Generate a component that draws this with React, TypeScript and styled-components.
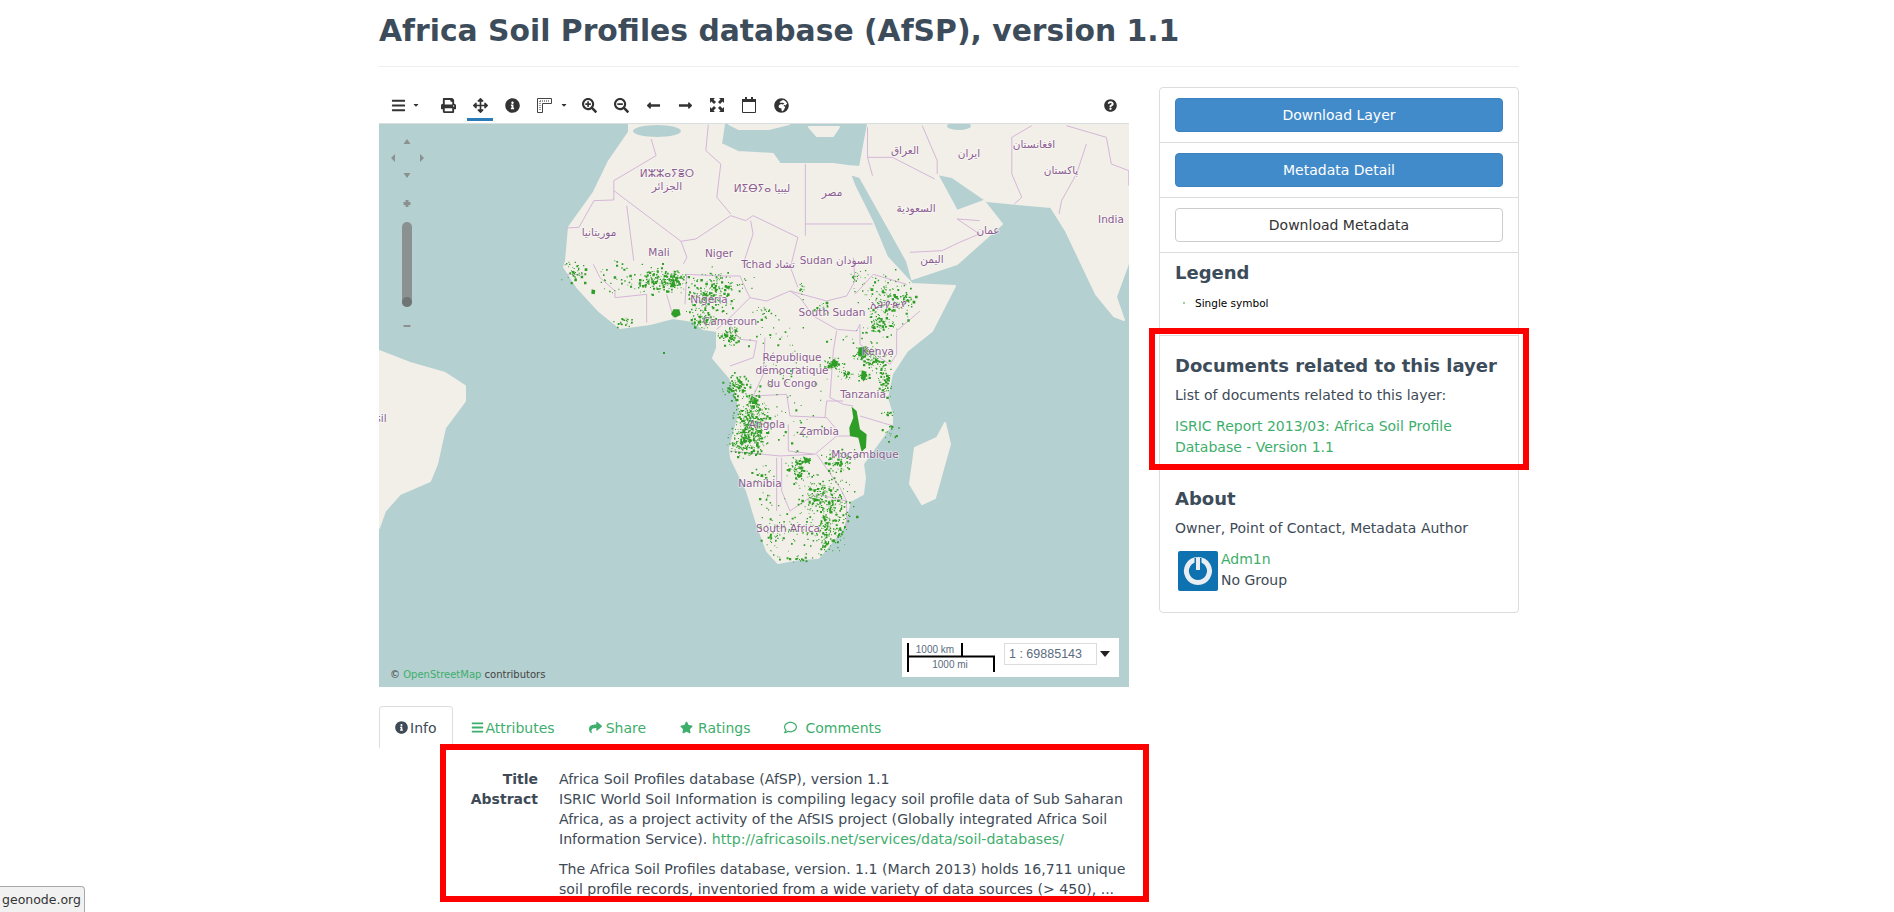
import styled, { createGlobalStyle } from 'styled-components';
import {
    FaBars, FaPrint, FaArrowsAlt, FaInfoCircle, FaSearchPlus, FaSearchMinus,
    FaLongArrowAltLeft, FaLongArrowAltRight, FaGlobeAfrica, FaQuestionCircle,
    FaCaretDown, FaShare, FaStar, FaRegComment,
} from 'react-icons/fa';

const GlobalStyle = createGlobalStyle`
    html, body{
        margin : 0;
        height : 912px;
        overflow : hidden;
        background : #fff;
    }
    body{
        font-family : "DejaVu Sans", sans-serif;
        font-size : 14px;
        line-height : 20px;
        color : #3e4a56;
    }
`;

const Page = styled.div`
    position : relative;
    height : 912px;
    overflow : hidden;
`;

const Container = styled.div`
    width : 1140px;
    margin-left : 379px;
`;

const PageHeader = styled.header`
    height : 66px;
    border-bottom : 1px solid #eee;
    box-sizing : content-box;

    h1{
        margin : 0;
        padding-top : 12px;
        font-size : 29.8px;
        line-height : 38px;
        font-weight : bold;
        color : #3d4c5a;
    }
`;

const Columns = styled.div`
    display : flex;
    gap : 30px;
    margin-top : 20px;
`;

const MainColumn = styled.main`
    width : 750px;
    flex : none;
`;

const Toolbar = styled.div`
    display : flex;
    align-items : center;
    height : 36px;
    padding : 0 12px;
    color : #333;
`;

const MenuButton = styled.div`
    display : flex;
    align-items : center;
    width : 41px;
    font-size : 15px;

    .caret{
        font-size : 8px;
        margin-left : 6px;
    }
`;

const ToolButton = styled.div<{ $active?: boolean; $wide?: boolean }>`
    position : relative;
    flex : none;
    display : flex;
    align-items : center;
    justify-content : center;
    width : ${p => (p.$wide ? '45px' : '32px')};
    height : 36px;
    font-size : 15px;
    padding-right : ${p => (p.$wide ? '13px' : '0')};
    box-sizing : border-box;

    .caret{
        position : absolute;
        right : 5px;
        font-size : 8px;
    }

    &::after{
        content : '';
        display : ${p => (p.$active ? 'block' : 'none')};
        position : absolute;
        left : 3px;
        right : 3px;
        bottom : 2px;
        height : 3px;
        background : #2b7bb9;
    }
`;

const HelpButton = styled.div`
    margin-left : auto;
    display : flex;
    font-size : 13px;
`;

const MapFrame = styled.div`
    position : relative;
    height : 564px;
    background : #b5d0d0;
    border-top : 1px solid #d8dedd;
    box-sizing : border-box;
    overflow : hidden;
`;

const MapCanvas = styled.svg`
    display : block;
`;

const Land = styled.path`
    fill : #f2efe9;
    stroke : #f2efe9;
    stroke-width : 2;
    stroke-linejoin : round;
`;

const Water = styled.ellipse`
    fill : #b5d0d0;
`;

const Border = styled.path`
    fill : none;
    stroke : #d5b6d8;
    stroke-width : 1;
    vector-effect : non-scaling-stroke;
`;

const Samples = styled.path`
    fill : #2f9e27;
`;

const MapLabel = styled.text`
    font-family : "DejaVu Sans", sans-serif;
    font-size : 10.5px;
    fill : #8c5c90;
    text-anchor : middle;
    stroke : rgba(255, 255, 255, 0.55);
    stroke-width : 1.5px;
    paint-order : stroke;
`;

const NavControl = styled.svg`
    position : absolute;
    left : 0;
    top : 0;
    fill : #8b9191;
`;

const Attribution = styled.div`
    position : absolute;
    left : 11px;
    bottom : 5px;
    font-size : 10px;
    line-height : 14px;
    color : #444;

    a{
        color : #3eae6c;
    }
`;

const ScaleBox = styled.div`
    position : absolute;
    right : 10px;
    bottom : 10px;
    width : 217px;
    height : 39px;
    background : #fff;
    display : flex;
    align-items : flex-start;
`;

const ScaleInput = styled.div`
    margin : 5px 0 0;
    width : 93px;
    height : 22px;
    box-sizing : border-box;
    border : 1px solid #dcdcdc;
    padding-left : 4px;
    font-family : "Liberation Sans", sans-serif;
    font-size : 12.5px;
    line-height : 20px;
    color : #5b6b80;
`;

const ScaleCaret = styled.div`
    margin : 13px 0 0 3px;
    width : 0;
    height : 0;
    border-left : 5px solid transparent;
    border-right : 5px solid transparent;
    border-top : 6px solid #222;
`;

const ScaleText = styled.text`
    font-family : "Liberation Sans", sans-serif;
    font-size : 10px;
    fill : #5b6b80;
    text-anchor : middle;
`;

const Tabs = styled.nav`
    display : flex;
    gap : 2px;
    height : 43px;
    margin-top : 19px;
    box-sizing : border-box;
`;

const Tab = styled.a<{ $active?: boolean; $gap?: number }>`
    display : flex;
    align-items : center;
    gap : ${p => p.$gap ?? 2}px;
    padding : 0 15px;
    height : 42px;
    box-sizing : border-box;
    border : 1px solid ${p => (p.$active ? '#ddd' : 'transparent')};
    border-bottom : none;
    border-radius : 4px 4px 0 0;
    color : ${p => (p.$active ? '#3e4a56' : '#3eae6c')};

    svg{
        font-size : 13px;
    }
`;

const InfoList = styled.dl`
    position : relative;
    display : grid;
    grid-template-columns : 159px 570px;
    column-gap : 21px;
    margin : 20px 0 0;

    dt{
        font-weight : bold;
        text-align : right;
    }
    dd{
        margin : 0;
        font-size : 14.12px;
    }
    p{
        margin : 0 0 10px;
    }
    a{
        color : #3eae6c;
    }
`;

const Highlight = styled.div<{ $box: string }>`
    position : absolute;
    inset : ${p => p.$box};
    border : 6px solid #ff0000;
    pointer-events : none;
`;

const SidePanel = styled.aside`
    width : 360px;
    height : 526px;
    box-sizing : border-box;
    border : 1px solid #ddd;
    border-radius : 4px;
`;

const ButtonRow = styled.div`
    padding : 10px 15px;
    border-bottom : 1px solid #ddd;
`;

const ActionButton = styled.button<{ $primary?: boolean }>`
    display : block;
    width : 100%;
    height : 34px;
    box-sizing : border-box;
    border : 1px solid ${p => (p.$primary ? '#3b82c0' : '#ccc')};
    border-radius : 4px;
    background : ${p => (p.$primary ? '#428bca' : '#fff')};
    color : ${p => (p.$primary ? '#fff' : '#333')};
    font-family : inherit;
    font-size : 14px;
`;

const PanelSection = styled.section<{ $height: number; $top: number; $ruled?: boolean }>`
    position : relative;
    height : ${p => p.$height}px;
    box-sizing : border-box;
    padding : ${p => p.$top}px 15px 0;
    border-top : ${p => (p.$ruled ? '1px solid #ddd' : 'none')};

    h4{
        margin : 0 0 9px;
        font-size : 18px;
        line-height : 20px;
        font-weight : bold;
        color : #3d4c5a;
    }
    p{
        margin : 0 0 10px;
        line-height : 21px;
    }
    a{
        color : #3eae6c;
        line-height : 21px;
    }
`;

const LegendRow = styled.div`
    display : flex;
    align-items : center;
    gap : 10px;
    margin-top : 10px;
    padding-left : 8px;
    font-size : 10.5px;
    color : #000;

    i{
        width : 2px;
        height : 2px;
        background : #9ccf98;
    }
`;

const OwnerRow = styled.div`
    display : flex;
    gap : 3px;
    margin : 0 0 0 3px;
    line-height : 21px;
`;

const Avatar = styled.svg`
    flex : none;
    margin-top : 2px;
`;

const StatusBubble = styled.div`
    position : absolute;
    left : -1px;
    bottom : 0;
    width : 86px;
    height : 26px;
    box-sizing : border-box;
    padding-left : 2px;
    border : 1px solid #a9a9a9;
    border-bottom : none;
    border-radius : 0 4px 0 0;
    background : #f1f1f1;
    font-size : 12.5px;
    line-height : 26px;
    color : #333;
    white-space : nowrap;
`;

// sample points, as [x, y, rx, ry, count] in the coordinates of the enlarged crop
const clusters: number[][] = [
    [40, 90, 30, 28, 40], [160, 110, 60, 40, 30], [280, 115, 50, 35, 130], [340, 115, 30, 25, 90],
    [190, 240, 20, 15, 25], [450, 170, 60, 50, 170], [480, 120, 70, 30, 60], [430, 240, 35, 20, 60],
    [510, 285, 25, 20, 70], [610, 215, 30, 20, 20], [650, 280, 60, 30, 18], [790, 200, 20, 20, 15],
    [960, 250, 35, 25, 90], [980, 170, 60, 60, 130], [1040, 170, 20, 15, 25], [890, 110, 20, 30, 20],
    [915, 340, 25, 20, 70], [950, 360, 30, 30, 70], [815, 370, 25, 15, 60], [855, 400, 15, 10, 30],
    [910, 405, 12, 15, 30], [975, 420, 15, 40, 55], [985, 515, 15, 5, 10], [530, 435, 30, 30, 110],
    [575, 550, 40, 60, 380], [550, 610, 40, 30, 110], [580, 480, 20, 25, 45], [710, 680, 25, 35, 80],
    [740, 655, 10, 8, 20], [770, 760, 40, 40, 110], [820, 800, 50, 60, 170], [800, 880, 40, 40, 110],
    [700, 860, 80, 60, 60], [720, 950, 60, 15, 20], [640, 900, 30, 40, 30], [840, 660, 40, 40, 70],
    [600, 690, 30, 30, 15], [990, 580, 20, 25, 18], [700, 380, 130, 100, 40], [720, 550, 70, 60, 20],
    [620, 780, 40, 60, 15], [725, 145, 10, 20, 12], [890, 290, 60, 30, 14],
];

const buildSamples = () => {
    let seed = 20130301;
    const rnd = () => {
        seed = (seed + 0x6d2b79f5) | 0;
        let t = Math.imul(seed ^ (seed >>> 15), 1 | seed);
        t = (t + Math.imul(t ^ (t >>> 7), 61 | t)) ^ t;
        return ((t ^ (t >>> 14)) >>> 0) / 4294967296;
    };
    let d = '';
    clusters.forEach(([x, y, rx, ry, n]) => {
        for (let i = 0; i < n; i++) {
            const a = rnd() * Math.PI * 2;
            // falls off towards the edge, so that clusters do not read as discs
            const r = Math.min(1.5, Math.sqrt(-2 * Math.log(1 - rnd() * 0.999)) * 0.6);
            const s = 2.5 + rnd() * rnd() * 6;
            const px = Math.round(x + Math.cos(a) * r * rx);
            const py = Math.round(y + Math.sin(a) * r * ry);
            d += `M${px} ${py}h${s.toFixed(1)}v${s.toFixed(1)}h-${s.toFixed(1)}z`;
        }
    });
    return d;
};

const samplePath = buildSamples();

const labels: [string, number, number][] = [
    ['ⵍⵣⵣⴰⵢⴻⵔ', 288, 53], ['الجزائر', 288, 66], ['ⵍⵉⴱⵢⴰ ليبيا', 383, 68], ['مصر', 453, 72],
    ['موريتانيا', 220, 112], ['العراق', 526, 30], ['ایران', 590, 33], ['افغانستان', 655, 24],
    ['پاکستان', 682, 50], ['السعودية', 537, 88], ['عمان', 609, 110], ['اليمن', 553, 139],
    ['India', 732, 99], ['Mali', 280, 132], ['Niger', 340, 133], ['Tchad تشاد', 389, 144],
    ['Sudan السودان', 457, 140], ['Nigeria', 330, 179], ['Cameroun', 351, 201], ['South Sudan', 453, 192],
    ['ኢትዮጵያ', 509, 184], ['Kenya', 499, 231], ['République', 413, 237], ['démocratique', 413, 250],
    ['du Congo', 413, 263], ['Tanzania', 484, 274], ['Angola', 388, 304], ['Zambia', 440, 311],
    ['Moçambique', 486, 334], ['Namibia', 381, 363], ['South Africa', 409, 408], ['sil', 2, 298],
];

const App = () => {
    return (
        <Page>
            <GlobalStyle />
            <Container>
                <PageHeader>
                    <h1>Africa Soil Profiles database (AfSP), version 1.1</h1>
                </PageHeader>
                <Columns>
                    <MainColumn>
                        <Toolbar>
                            <MenuButton><FaBars /><FaCaretDown className="caret" /></MenuButton>
                            <ToolButton><FaPrint /></ToolButton>
                            <ToolButton $active><FaArrowsAlt /></ToolButton>
                            <ToolButton><FaInfoCircle /></ToolButton>
                            <ToolButton $wide>
                                <svg width="15" height="15" viewBox="0 0 15 15">
                                    <path d="M.5.5h14v5h-9v9h-5z" fill="#fff" stroke="#444" />
                                    <path d="M3 3h10M3 3v10" stroke="#777" strokeWidth="1.5" strokeDasharray="1 1" fill="none" />
                                </svg>
                                <FaCaretDown className="caret" />
                            </ToolButton>
                            <ToolButton><FaSearchPlus /></ToolButton>
                            <ToolButton><FaSearchMinus /></ToolButton>
                            <ToolButton><FaLongArrowAltLeft /></ToolButton>
                            <ToolButton><FaLongArrowAltRight /></ToolButton>
                            <ToolButton>
                                <svg width="14" height="14" viewBox="0 0 14 14" fill="#333">
                                    <path d="M0 0h5L3.500 1.500 6 4 4 6 1.500 3.500 0 5zM14 0v5l-1.500-1.500L10 6 8 4l2.500-2.500L9 0zM0 14V9l1.500 1.500L4 8l2 2-2.500 2.500L5 14zM14 14H9l1.500-1.500L8 10l2-2 2.500 2.500L14 9z" />
                                </svg>
                            </ToolButton>
                            <ToolButton>
                                <svg width="14" height="16" viewBox="0 0 14 16">
                                    <path d="M.5 3h13v12.500H.5z" fill="#fff" stroke="#333" />
                                    <path d="M0 2h14v3H0zM3 0h2v3H3zM9 0h2v3H9z" fill="#333" />
                                </svg>
                            </ToolButton>
                            <ToolButton><FaGlobeAfrica /></ToolButton>
                            <HelpButton><FaQuestionCircle /></HelpButton>
                        </Toolbar>
                        <MapFrame>
                            <MapCanvas width="750" height="564" viewBox="0 0 750 564">
                                <Land d="M250 0L250 8L230 37L215 68L190 103L187 137L185 143L198 163L220 187L241 204L271 200L294 194L314 197L324 205L338 207L338 224L334 234L351 254L358 274L361 287L351 324L352 334L368 367L378 400L388 427L399 439L421 435L439 434L448 424L464 404L471 377L484 370L486 354L484 340L513 300L513 290L508 274L513 250L528 227L553 207L576 162L533 160L508 133L493 97L476 63L471 50L481 53L481 43L469 42L454 40L426 40L401 40L394 30L359 28L342 20L345 0Z" />
                                <Land d="M489 0L481 43L481 53L509 103L528 137L533 155L578 140L623 100L605 77L578 87L558 50L573 53L608 77L638 80L672 83L687 107L717 170L735 192L745 196L737 173L750 137L750 0Z" />
                                <Land d="M0 227L31 239L66 249L86 262L86 277L66 304L58 340L51 357L21 370L6 387L0 404Z" />
                                <Land d="M566 299L571 320L556 374L543 380L531 360L536 324L558 314Z" />
                                <Land d="M350 0h60l-20 5h-30zM430 3h30l-6 9h-16z" />
                                <Water cx="278" cy="7" rx="24" ry="6" />
                                <Water cx="580" cy="2" rx="12" ry="4" />
                                <g transform="matrix(0.4975 0 0 0.3333 -8.96 -123.33)">
                                    <Border d="M565 415L575 465L490 540L490 598L450 600L420 680L395 682M490 570L625 722M516 615L530 780M680 372L675 450L705 490L697 590L725 640M625 722L655 715L725 645L755 660L770 645L860 710M875 490L875 705M875 670L1010 670M860 710L845 800L860 860M765 660L770 700L750 790M625 722L637 770L630 790M1000 380L1000 470L1050 470L1135 535M1010 525L1000 470M1085 755L1150 750L1185 725L1225 700L1180 655L1225 660M1110 375L1140 480L1140 520M1290 410L1290 520L1310 590L1295 610M1290 410L1330 375M1400 375L1480 410L1490 490L1525 510L1525 555M1440 430L1420 520L1390 600L1385 640" />
                                </g>
                                <g transform="matrix(0.3333 0 0 0.3333 181 117)">
                                    <Border d="M20 100L70 100M100 70L120 110L165 150L165 170L260 160L260 245M320 160L340 230M380 100L375 190M380 100L480 105L540 105L560 150L570 170L500 240L470 265M500 240L540 295L590 300L580 350L510 375M570 170L620 180L690 150L720 170L760 225L830 265L890 270L900 250M690 150L745 165L800 180L860 165L885 120L880 50M885 160L940 100L1040 130M900 250L900 310L990 370L1010 340L1010 270L1080 210M615 290L610 400L580 465L680 460L690 525L800 530L825 560M830 270L820 330L810 470L850 490L880 495M800 480L850 480M800 480L795 530M685 550L685 630L765 640L830 585L900 585M510 630L660 645L760 640M650 650L650 810M665 650L665 750L690 810L750 770L770 760L860 780M770 640L840 740L860 780L860 860M900 525L1000 555" />
                                    <Samples d={samplePath} />
                                    <Samples d="M875 497L890 510L900 565L920 580L918 620L905 632L895 590L870 585L868 560L880 530ZM340 205L358 205L362 222L345 230L333 220ZM95 145L106 148L104 160L94 158ZM730 645L750 660L735 668ZM820 355L835 362L828 378L812 372ZM905 388L920 392L915 418L903 415ZM895 320L920 315L918 350L895 345Z" />
                                </g>
                                {labels.map(([name, x, y]) => (
                                    <MapLabel key={name} x={x} y={y}>{name}</MapLabel>
                                ))}
                                <Samples d="M284 228h2v2h-2z" />
                            </MapCanvas>
                            <NavControl width="60" height="215" viewBox="0 0 60 215">
                                <path d="M28 15l3.500 5h-7zM12 34l4-4v8zM45 34l-4-4v8zM24.500 49h7L28 54zM26.500 76h3v2h2v3h-2v2h-3v-2h-2v-3h2zM24.500 201h7v2h-7z" />
                                <rect x="23" y="98" width="10" height="85" rx="5" />
                                <circle cx="28" cy="178" r="5" fill="#6f7575" />
                            </NavControl>
                            <Attribution>© <a>OpenStreetMap</a> contributors</Attribution>
                            <ScaleBox>
                                <svg width="102" height="39" viewBox="0 0 102 39">
                                    <path d="M6 5v29M6 18.500h87M60 5v13M92 18v16" stroke="#000" strokeWidth="2" fill="none" />
                                    <ScaleText x="33" y="15">1000 km</ScaleText>
                                    <ScaleText x="48" y="30">1000 mi</ScaleText>
                                </svg>
                                <ScaleInput>1 : 69885143</ScaleInput>
                                <ScaleCaret />
                            </ScaleBox>
                        </MapFrame>
                        <Tabs>
                            <Tab $active><FaInfoCircle />Info</Tab>
                            <Tab><FaBars />Attributes</Tab>
                            <Tab $gap={4}><FaShare />Share</Tab>
                            <Tab $gap={5}><FaStar />Ratings</Tab>
                            <Tab $gap={8}><FaRegComment />Comments</Tab>
                        </Tabs>
                        <InfoList>
                            <dt>Title</dt>
                            <dd>Africa Soil Profiles database (AfSP), version 1.1</dd>
                            <dt>Abstract</dt>
                            <dd>
                                <p>ISRIC World Soil Information is compiling legacy soil profile data of Sub Saharan Africa, as a project activity of the AfSIS project (Globally integrated Africa Soil Information Service). <a>http://africasoils.net/services/data/soil-databases/</a></p>
                                <p>The Africa Soil Profiles database, version. 1.1 (March 2013) holds 16,711 unique soil profile records, inventoried from a wide variety of data sources (&gt; 450), ...</p>
                            </dd>
                            <Highlight $box="-25px -20px 7px 61px" />
                        </InfoList>
                    </MainColumn>
                    <SidePanel>
                        <ButtonRow><ActionButton $primary>Download Layer</ActionButton></ButtonRow>
                        <ButtonRow><ActionButton $primary>Metadata Detail</ActionButton></ButtonRow>
                        <ButtonRow><ActionButton>Download Metadata</ActionButton></ButtonRow>
                        <PanelSection $height={82} $top={10}>
                            <h4>Legend</h4>
                            <LegendRow><i />Single symbol</LegendRow>
                        </PanelSection>
                        <PanelSection $height={144} $top={20} $ruled>
                            <h4>Documents related to this layer</h4>
                            <p>List of documents related to this layer:</p>
                            <a>ISRIC Report 2013/03: Africa Soil Profile Database - Version 1.1</a>
                            <Highlight $box="-8px -11px 9px -11px" />
                        </PanelSection>
                        <PanelSection $height={130} $top={10}>
                            <h4>About</h4>
                            <p>Owner, Point of Contact, Metadata Author</p>
                            <OwnerRow>
                                <Avatar width="40" height="40" viewBox="0 0 40 40">
                                    <rect width="40" height="40" rx="2" fill="#0f72b0" />
                                    <path d="M20 8.500a11.500 11.500 0 1 1-.1 0" fill="none" stroke="#e8eef2" strokeWidth="5" />
                                    <path d="M20 7v13" stroke="#0f72b0" strokeWidth="7" />
                                    <path d="M20 7v12" stroke="#e8eef2" strokeWidth="4" />
                                </Avatar>
                                <div>
                                    <a>Adm1n</a>
                                    <div>No Group</div>
                                </div>
                            </OwnerRow>
                        </PanelSection>
                    </SidePanel>
                </Columns>
            </Container>
            <StatusBubble>geonode.org</StatusBubble>
        </Page>
    );
};

export default App;
